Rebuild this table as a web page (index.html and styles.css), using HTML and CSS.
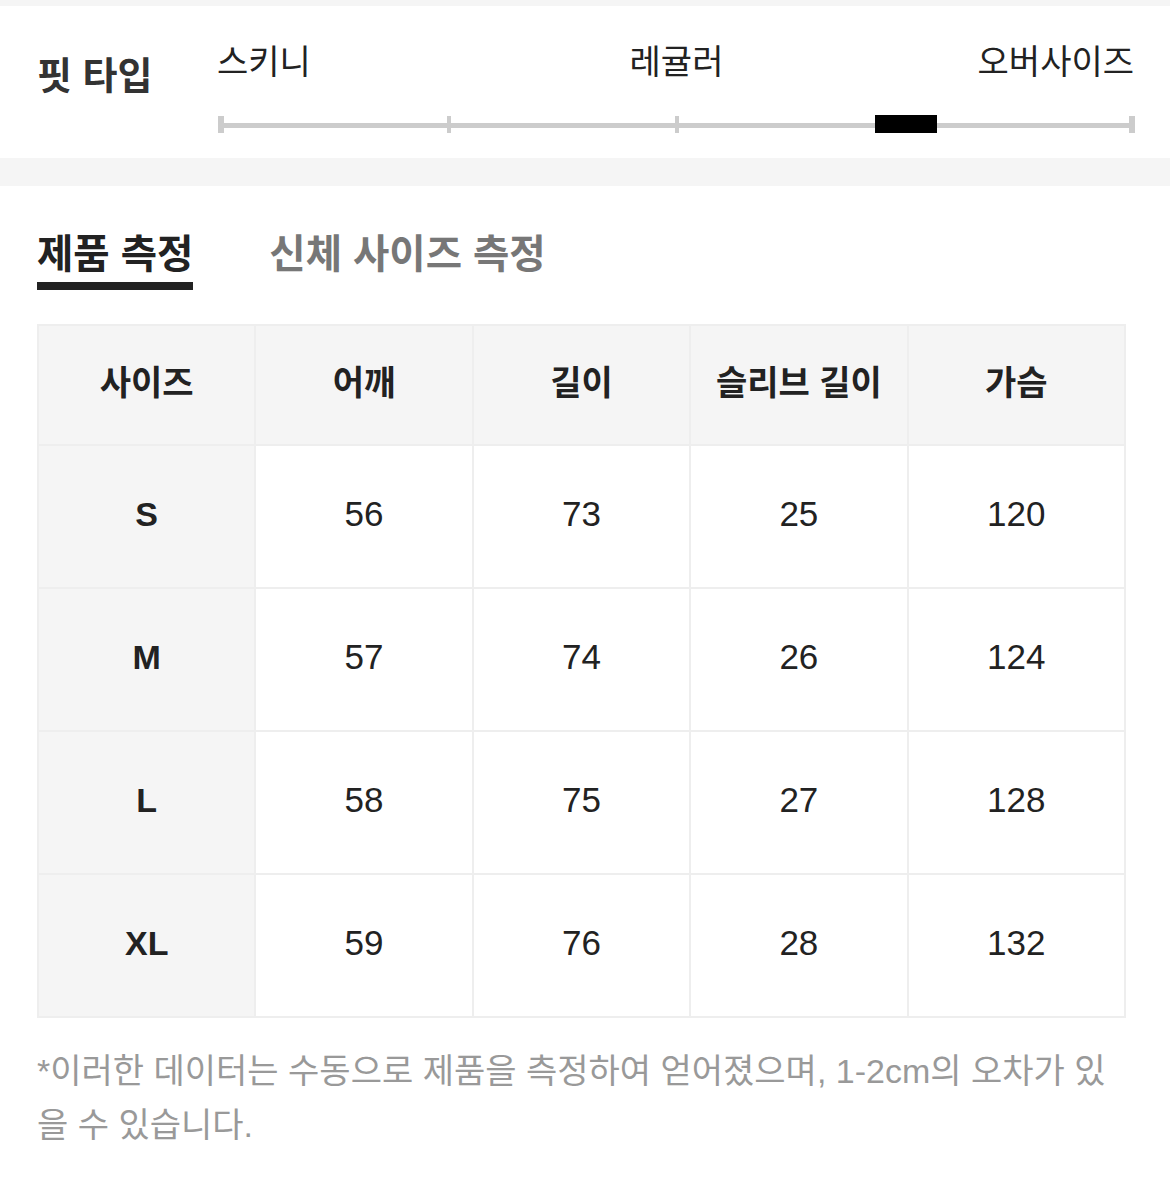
FILE: index.html
```html
<!DOCTYPE html>
<html lang="ko">
<head>
<meta charset="utf-8">
<title>사이즈 정보</title>
<link rel="stylesheet" href="styles.css">
</head>
<body>
<div class="strip"></div>
<section class="fit">
  <h2 class="fit-title">핏 타입</h2>
  <div class="slider">
    <div class="labels">
      <span class="lbl lbl-left">스키니</span>
      <span class="lbl lbl-mid">레귤러</span>
      <span class="lbl lbl-right">오버사이즈</span>
    </div>
    <div class="track">
      <span class="tick tick-end"></span>
      <span class="tick"></span>
      <span class="tick"></span>
      <span class="tick"></span>
      <span class="tick tick-end"></span>
      <span class="marker"></span>
    </div>
  </div>
</section>
<div class="band"></div>
<section class="measure">
  <div class="tabs">
    <span class="tab tab-active">제품 측정</span>
    <span class="tab">신체 사이즈 측정</span>
  </div>
  <table class="size-table">
    <thead>
      <tr>
        <th>사이즈</th><th>어깨</th><th>길이</th><th>슬리브 길이</th><th>가슴</th>
      </tr>
    </thead>
    <tbody>
      <tr><th>S</th><td>56</td><td>73</td><td>25</td><td>120</td></tr>
      <tr><th>M</th><td>57</td><td>74</td><td>26</td><td>124</td></tr>
      <tr><th>L</th><td>58</td><td>75</td><td>27</td><td>128</td></tr>
      <tr><th>XL</th><td>59</td><td>76</td><td>28</td><td>132</td></tr>
    </tbody>
  </table>
  <p class="note">*이러한 데이터는 수동으로 제품을 측정하여 얻어졌으며, 1-2cm의 오차가 있을 수 있습니다.</p>
</section>
</body>
</html>
```

FILE: styles.css
```css
* { box-sizing: border-box; }
html, body {
  margin: 0;
  padding: 0;
  background: #ffffff;
  font-family: "Liberation Sans", "Noto Sans CJK KR", sans-serif;
  color: #222222;
}
.strip { height: 6px; background: #f5f5f5; }
.fit {
  height: 152px;
  display: flex;
  align-items: flex-start;
  padding: 36px 35px 0 37px;
}
.fit-title {
  margin: 12px 0 0 0;
  width: 181px;
  flex: none;
  font-size: 38px;
  line-height: 44px;
  font-weight: 700;
  color: #333333;
}
.slider { flex: 1; display: flex; flex-direction: column; }
.labels {
  display: grid;
  grid-template-columns: 1fr auto 1fr;
  font-size: 34px;
  line-height: 40px;
  color: #222222;
}
.lbl-left { justify-self: start; margin-left: -1px; }
.lbl-mid { justify-self: center; }
.lbl-right { justify-self: end; padding-right: 1px; }
.track {
  position: relative;
  margin-top: 34px;
  height: 17px;
  display: flex;
  justify-content: space-between;
  align-items: center;
}
.track::before {
  content: "";
  position: absolute;
  left: 0;
  right: 0;
  top: 7px;
  height: 5px;
  background: #cccccc;
}
.tick {
  position: relative;
  width: 4px;
  height: 17px;
  background: #cccccc;
}
.tick-end { width: 6px; }
.marker {
  position: absolute;
  left: 657px;
  top: -1px;
  width: 62px;
  height: 18px;
  background: #000000;
}
.band { height: 28px; background: #f5f5f5; }
.measure { padding: 44px 44px 0 37px; }
.tabs { display: flex; gap: 76px; align-items: flex-start; }
.tab {
  font-size: 39.5px;
  line-height: 48px;
  font-weight: 700;
  color: #777777;
  padding-bottom: 4px;
  border-bottom: 8px solid transparent;
}
.tab-active { color: #222222; border-bottom-color: #222222; }
.size-table {
  margin-top: 34px;
  width: 1089px;
  border-collapse: collapse;
  table-layout: fixed;
}
.size-table th,
.size-table td {
  border: 2px solid #eeeeee;
  text-align: center;
  font-size: 35px;
  color: #222222;
  padding: 0 0 5px 0;
}
.size-table thead th {
  height: 120px;
  background: #f5f5f5;
  font-weight: 700;
  font-size: 34px;
  padding-bottom: 9px;
}
.size-table tbody th {
  background: #f5f5f5;
  font-weight: 700;
  font-size: 34px;
}
.size-table tbody th,
.size-table tbody td { height: 143px; }
.size-table td { font-weight: 400; }
.note {
  margin: 26px 0 0 0;
  font-size: 34px;
  line-height: 54px;
  color: #999999;
}
```
